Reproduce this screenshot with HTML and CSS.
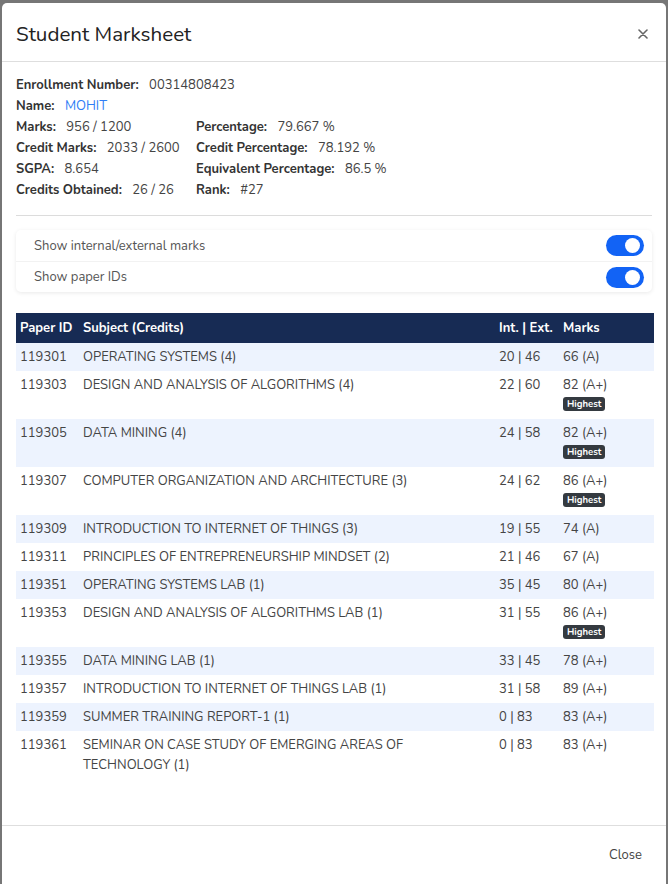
FILE: index.html
```html
<!DOCTYPE html>
<html>
<head>
<meta charset="utf-8">
<link rel="stylesheet" href="styles.css">
</head>
<body>
<div class="modal">
  <div class="modal-header">
    <h5 class="modal-title">Student Marksheet</h5>
    <button class="btn-close" aria-label="Close">
      <svg width="10" height="10" viewBox="0 0 10 10"><path d="M1 1L9 9M9 1L1 9" stroke="#666" stroke-width="1.6" stroke-linecap="round"/></svg>
    </button>
  </div>
  <div class="modal-body">
    <div class="info">
      <div class="line"><span class="lbl">Enrollment Number:</span> <span class="val">00314808423</span></div>
      <div class="line"><span class="lbl">Name:</span> <span class="val link">MOHIT</span></div>
      <div class="grid">
        <div class="line"><span class="lbl">Marks:</span> <span class="val">956 / 1200</span></div>
        <div class="line"><span class="lbl">Percentage:</span> <span class="val">79.667 %</span></div>
        <div class="line"><span class="lbl">Credit Marks:</span> <span class="val">2033 / 2600</span></div>
        <div class="line"><span class="lbl">Credit Percentage:</span> <span class="val">78.192 %</span></div>
        <div class="line"><span class="lbl">SGPA:</span> <span class="val">8.654</span></div>
        <div class="line"><span class="lbl">Equivalent Percentage:</span> <span class="val">86.5 %</span></div>
        <div class="line"><span class="lbl">Credits Obtained:</span> <span class="val">26 / 26</span></div>
        <div class="line"><span class="lbl">Rank:</span> <span class="val">#27</span></div>
      </div>
    </div>
    <hr class="sep">
    <div class="toggles">
      <div class="toggle-row"><span>Show internal/external marks</span><span class="switch"></span></div>
      <div class="toggle-row"><span>Show paper IDs</span><span class="switch"></span></div>
    </div>
    <table class="marks">
      <thead>
        <tr><th class="c-id">Paper ID</th><th>Subject (Credits)</th><th class="c-ie">Int. | Ext.</th><th class="c-m">Marks</th></tr>
      </thead>
      <tbody>
        <tr><td>119301</td><td>OPERATING SYSTEMS (4)</td><td>20 | 46</td><td>66 (A)</td></tr>
        <tr><td>119303</td><td>DESIGN AND ANALYSIS OF ALGORITHMS (4)</td><td>22 | 60</td><td>82 (A+)<br><span class="badge">Highest</span></td></tr>
        <tr><td>119305</td><td>DATA MINING (4)</td><td>24 | 58</td><td>82 (A+)<br><span class="badge">Highest</span></td></tr>
        <tr><td>119307</td><td>COMPUTER ORGANIZATION AND ARCHITECTURE (3)</td><td>24 | 62</td><td>86 (A+)<br><span class="badge">Highest</span></td></tr>
        <tr><td>119309</td><td>INTRODUCTION TO INTERNET OF THINGS (3)</td><td>19 | 55</td><td>74 (A)</td></tr>
        <tr><td>119311</td><td>PRINCIPLES OF ENTREPRENEURSHIP MINDSET (2)</td><td>21 | 46</td><td>67 (A)</td></tr>
        <tr><td>119351</td><td>OPERATING SYSTEMS LAB (1)</td><td>35 | 45</td><td>80 (A+)</td></tr>
        <tr><td>119353</td><td>DESIGN AND ANALYSIS OF ALGORITHMS LAB (1)</td><td>31 | 55</td><td>86 (A+)<br><span class="badge">Highest</span></td></tr>
        <tr><td>119355</td><td>DATA MINING LAB (1)</td><td>33 | 45</td><td>78 (A+)</td></tr>
        <tr><td>119357</td><td>INTRODUCTION TO INTERNET OF THINGS LAB (1)</td><td>31 | 58</td><td>89 (A+)</td></tr>
        <tr><td>119359</td><td>SUMMER TRAINING REPORT-1 (1)</td><td>0 | 83</td><td>83 (A+)</td></tr>
        <tr><td>119361</td><td>SEMINAR ON CASE STUDY OF EMERGING AREAS OF<br>TECHNOLOGY (1)</td><td>0 | 83</td><td>83 (A+)</td></tr>
      </tbody>
    </table>
  </div>
  <div class="modal-footer">
    <button class="btn-text">Close</button>
  </div>
</div>
</body>
</html>
```

FILE: styles.css
```css
* { box-sizing: border-box; }
html, body { margin: 0; padding: 0; }
body {
  background: #767676;
  height: 884px;
  overflow: hidden;
  font-family: "Nunito", "Lato", "Noto Sans", sans-serif;
  color: #3c3c3c;
  padding: 3px 2px 0 2px;
}
.modal {
  background: #fff;
  border-radius: 5px 5px 0 0;
  width: 664px;
  min-height: 890px;
  display: flex;
  flex-direction: column;
}
.modal-header {
  display: flex;
  align-items: center;
  justify-content: space-between;
  padding: 17px 14px 13px 14px;
  height: 59px;
  border-bottom: 1px solid #dedede;
}
.modal-title {
  margin: 0;
  font-size: 20.6px;
  font-weight: 400;
  color: #222;
}
.btn-close {
  border: 0;
  background: none;
  padding: 4px;
  display: flex;
  cursor: pointer;
}
.modal-body {
  padding: 13px 14px 46px 14px;
  border-bottom: 1px solid #dedede;
}
.info { font-size: 13px; }
.line { line-height: 21px; white-space: nowrap; }
.lbl { font-weight: 700; color: #333; margin-right: 7px; }
.val { color: #444; }
.link { color: #2f7df6; }
.grid {
  display: grid;
  grid-template-columns: 180px 1fr;
}
.sep {
  border: 0;
  border-top: 1px solid #dcdcdc;
  margin: 14px 0 14px 0;
}
.toggles {
  border-radius: 5px;
  box-shadow: 0 1px 4px rgba(0,0,0,0.09);
  margin-bottom: 21px;
}
.toggle-row {
  display: flex;
  justify-content: space-between;
  align-items: center;
  height: 31px;
  padding: 0 8px 0 18px;
  font-size: 13px;
  color: #555;
}
.toggle-row + .toggle-row { border-top: 1px solid #f2f2f2; }
.switch {
  width: 38px;
  height: 21px;
  border-radius: 11px;
  background: #1263f5;
  position: relative;
}
.switch::after {
  content: "";
  position: absolute;
  right: 4px;
  top: 3px;
  width: 15px;
  height: 15px;
  border-radius: 50%;
  background: #fff;
}
.marks {
  width: 638px;
  border-collapse: collapse;
  font-size: 13px;
}
.marks th {
  background: #172b54;
  color: #fff;
  font-weight: 700;
  text-align: left;
  height: 30px;
  padding: 0 4px;
}
.marks td {
  padding: 4px 4px;
  line-height: 20px;
  vertical-align: top;
  color: #444;
}
.marks tbody tr:nth-child(odd) td { background: #edf3fe; }
.c-id { width: 63px; }
.c-ie { width: 64px; }
.c-m { width: 95px; }
.badge {
  display: inline-block;
  background: #343a40;
  color: #fff;
  font-size: 9.5px;
  font-weight: 700;
  line-height: 14px;
  padding: 0 4px;
  border-radius: 3px;
  vertical-align: top;
  margin-top: 2px;
}
.modal-footer {
  display: flex;
  justify-content: flex-end;
  padding: 16px 16px;
}
.btn-text {
  border: 0;
  background: none;
  font-family: inherit;
  font-size: 13px;
  color: #444;
  padding: 4px 8px;
}
```
